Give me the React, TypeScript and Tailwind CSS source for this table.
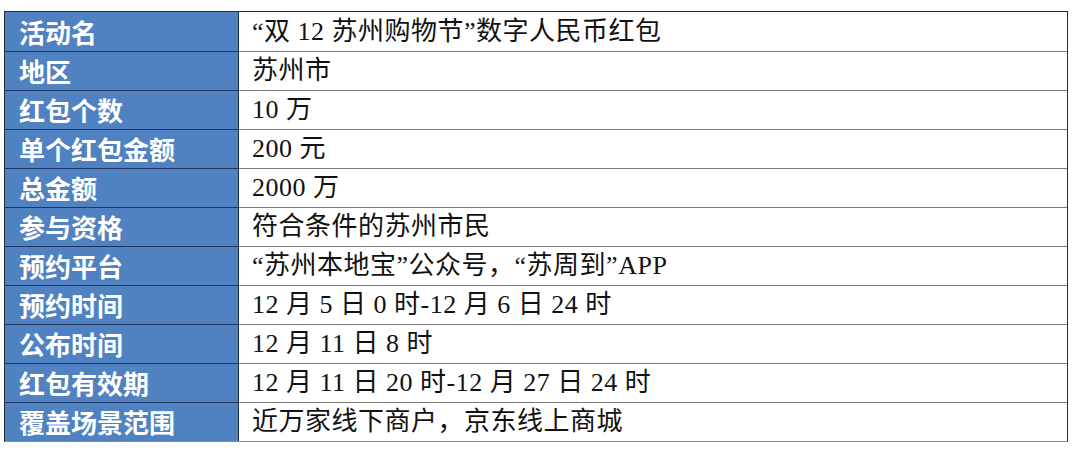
import React from "react";

const rows: [string, string][] = [
  ["活动名", "“双 12 苏州购物节”数字人民币红包"],
  ["地区", "苏州市"],
  ["红包个数", "10 万"],
  ["单个红包金额", "200 元"],
  ["总金额", "2000 万"],
  ["参与资格", "符合条件的苏州市民"],
  ["预约平台", "“苏州本地宝”公众号，“苏周到”APP"],
  ["预约时间", "12 月 5 日 0 时-12 月 6 日 24 时"],
  ["公布时间", "12 月 11 日 8 时"],
  ["红包有效期", "12 月 11 日 20 时-12 月 27 日 24 时"],
  ["覆盖场景范围", "近万家线下商户，京东线上商城"],
];

export default function App() {
  return (
    <div className="w-[1080px] h-[451px] bg-white pt-[11px] pl-[4px]">
      <div className="w-[1064px] border border-[#2a2a2a] border-b-[#8a8a8a] flex flex-col">
        {rows.map(([k, v], i) => (
          <div key={i} className="flex h-[39px]">
            <div
              className={
                "w-[234px] shrink-0 bg-[#5081c0] border-r border-[#1f2d4a] flex items-center pl-[14px] text-white font-semibold text-[26px] leading-none " +
                (i > 0 ? "border-t border-t-[#1d3560]" : "")
              }
              style={{ fontFamily: '"Noto Sans CJK SC", sans-serif' }}
            >
              {k}
            </div>
            <div
              className={
                "flex-1 flex items-center pl-[13px] text-[#111] text-[26px] leading-none tracking-[0.5px] " +
                (i > 0 ? "border-t border-t-[#7a7a7a]" : "")
              }
              style={{ fontFamily: '"Liberation Serif", "Noto Sans CJK SC", serif' }}
            >
              {v}
            </div>
          </div>
        ))}
      </div>
    </div>
  );
}
